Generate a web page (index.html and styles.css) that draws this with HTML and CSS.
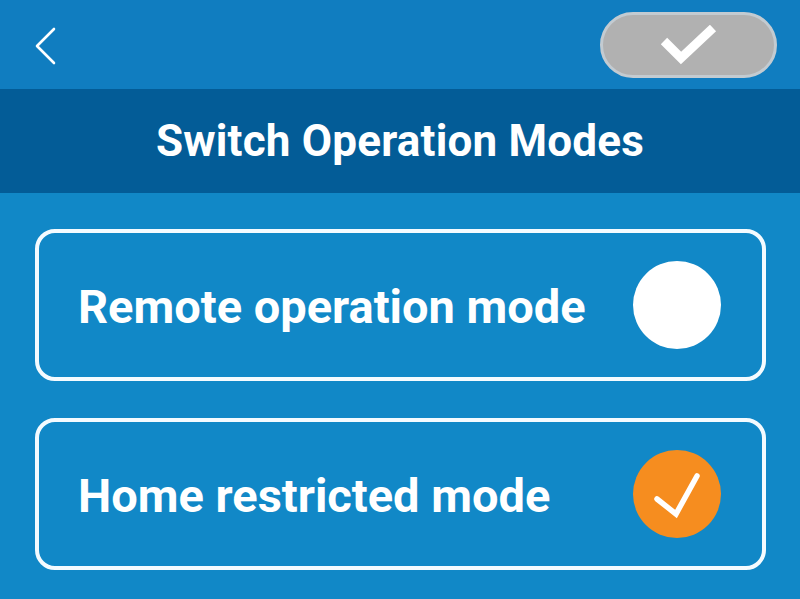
FILE: index.html
```html
<!DOCTYPE html>
<html>
<head>
    <title>Switch Operation Modes</title>
    <link rel="stylesheet" href="styles.css">
</head>
<body>
    <div class="topbar">
        <button class="back" aria-label="Back">
            <svg width="24" height="40" viewBox="0 0 24 40">
                <polyline points="20,3 3,20 20,37" fill="none" stroke="#fff" stroke-width="2.6" stroke-linecap="round" stroke-linejoin="round"/>
            </svg>
        </button>
        <button class="confirm" aria-label="Confirm">
            <svg width="60" height="40" viewBox="0 0 60 40">
                <polyline points="5,16 22,33 54,3" fill="none" stroke="#fff" stroke-width="9"/>
            </svg>
        </button>
    </div>

    <div class="header">
        <h1>Switch Operation Modes</h1>
    </div>

    <div class="modes">
        <div class="mode">
            <span class="label">Remote operation mode</span>
            <span class="radio"></span>
        </div>
        <div class="mode">
            <span class="label">Home restricted mode</span>
            <span class="radio checked">
                <svg width="88" height="88" viewBox="0 0 88 88">
                    <polyline points="24,49 43,64 64,26" fill="none" stroke="#fff" stroke-width="5.5" stroke-linecap="round" stroke-linejoin="miter"/>
                </svg>
            </span>
        </div>
    </div>
</body>
</html>
```

FILE: styles.css
```css
body { margin: 0; font-family: Roboto, "Liberation Sans", sans-serif; background: #1188c7; height: 599px; overflow: hidden; }
.topbar { height: 89px; background: #107dc0; display: flex; align-items: center; justify-content: space-between; padding: 0 23px 0 34px; box-sizing: border-box; }
.back { background: none; border: none; padding: 0; display: flex; margin-top: 2px; }
.confirm { width: 177px; height: 66px; border-radius: 33px; background: #b1b1b1; border: 3px solid #c3cbd1; display: flex; align-items: center; justify-content: center; padding: 0; box-sizing: border-box; margin-top: 1px; }
.header { height: 104px; background: #035c97; display: flex; align-items: center; justify-content: center; }
.header h1 { margin: 0; color: #fff; font-size: 44px; font-weight: 700; letter-spacing: 0.2px; }
.modes { padding: 36px 34px 0 35px; display: flex; flex-direction: column; gap: 37px; }
.mode { height: 152px; border: 4px solid #f4fbff; border-radius: 20px; box-sizing: border-box; display: flex; align-items: center; justify-content: space-between; padding: 0 41px 0 39px; }
.label { color: #fff; font-size: 47px; font-weight: 700; margin-top: 2px; }
.radio { width: 88px; height: 88px; border-radius: 50%; background: #fff; display: block; }
.radio.checked { background: #f68d1f; }
.radio svg { display: block; }
```
